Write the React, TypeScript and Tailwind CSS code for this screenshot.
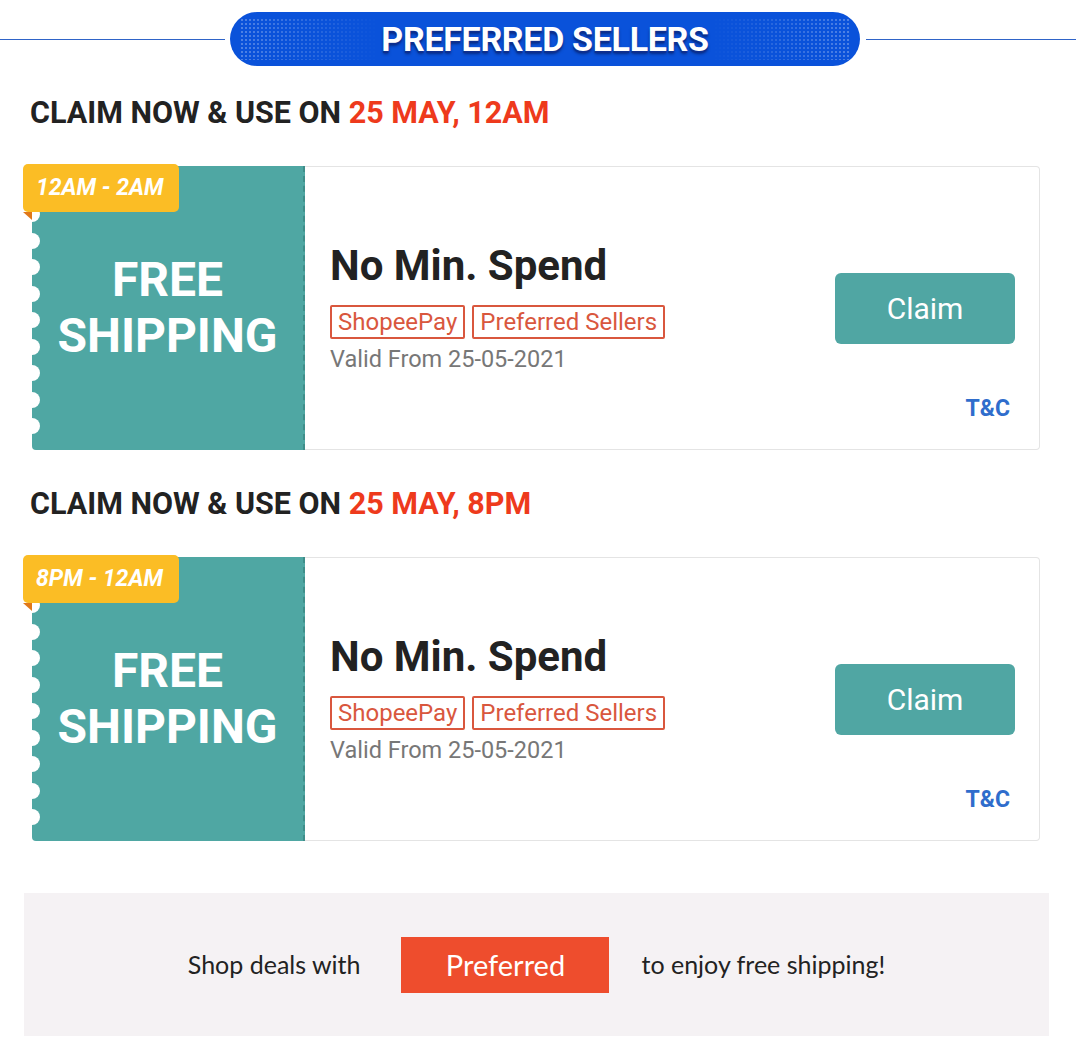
import { Fragment } from 'react';

type Voucher = {
  day: string;
  slot: string;
};

const vouchers: Voucher[] = [
  { day: '25 MAY, 12AM', slot: '12AM - 2AM' },
  { day: '25 MAY, 8PM', slot: '8PM - 12AM' },
];

const notches = Array.from({ length: 9 }, (_, i) => i);

function VoucherCard({ slot }: { slot: string }) {
  return (
    <div className="relative flex h-[284px] w-[1008px] ml-[32px] bg-white">
      {/* teal stub with scalloped edge */}
      <div className="relative flex w-[273px] shrink-0 items-center justify-center rounded-l-[4px] border-r-2 border-dashed border-[#3f8e8a] bg-[#4fa7a3]">
        <div className="absolute -left-[8px] top-[40px] flex flex-col gap-[10.5px]">
          {notches.map((n) => (
            <span key={n} className="block h-[16px] w-[16px] rounded-full bg-white" />
          ))}
        </div>
        <p className="text-center text-[48px] font-bold leading-[56px] text-white">
          FREE
          <br />
          SHIPPING
        </p>
      </div>

      {/* ribbon */}
      <div className="absolute -left-[9px] -top-[2px] flex h-[48px] w-[156px] items-center rounded-[5px] bg-[#fbbd25] pl-[13px]">
        <span className="text-[23px] font-bold italic text-white">{slot}</span>
      </div>
      <div className="absolute -left-[9px] top-[46px] h-0 w-0 border-l-[9px] border-t-[8px] border-l-transparent border-t-[#e0781a]" />

      <div className="flex flex-1 items-center rounded-r-[4px] border border-l-0 border-[#e4e4e4]">
        <div className="flex-1 pl-[25px]">
          <h3 className="text-[42px] font-bold leading-[46px] text-[#222]">No Min. Spend</h3>
          <div className="mt-[16px] flex gap-[7px]">
            <span className="rounded-[2px] border-2 border-[#d9573e] px-[6px] text-[24px] leading-[30px] text-[#d9573e]">ShopeePay</span>
            <span className="rounded-[2px] border-2 border-[#d9573e] px-[6px] text-[24px] leading-[30px] text-[#d9573e]">Preferred Sellers</span>
          </div>
          <p className="mt-[6px] text-[23.5px] leading-[28px] text-[#777]">Valid From 25-05-2021</p>
        </div>
        <div className="grid w-[204px] grid-rows-[1fr_auto_1fr] self-stretch pr-[24px]">
          <div />
          <button className="h-[71px] w-[180px] rounded-[6px] bg-[#50a6a3] text-[30px] text-white">Claim</button>
          <div className="flex items-end justify-end pb-[26px] pr-[5px]">
            <span className="text-[23px] font-bold leading-[28px] text-[#2f6dcc]">T&amp;C</span>
          </div>
        </div>
      </div>
    </div>
  );
}

export default function App() {
  return (
    <div className="min-h-[1050px] w-[1076px] bg-white pt-[12px] font-['Roboto',sans-serif]">
      <div className="flex items-center">
        <div className="h-px w-[225px] bg-[#2f64c8]" />
        <div className="relative ml-[5px] mr-[6px] flex h-[54px] w-[630px] items-center justify-center overflow-hidden rounded-full bg-[#0a52da]">
          <div className="absolute inset-y-[6px] left-[10px] w-[140px] bg-[radial-gradient(circle,rgba(255,255,255,0.28)_1px,transparent_1.3px)] bg-[length:4px_4px] [mask-image:linear-gradient(90deg,black,transparent)]" />
          <div className="absolute inset-y-[6px] right-[10px] w-[140px] bg-[radial-gradient(circle,rgba(255,255,255,0.28)_1px,transparent_1.3px)] bg-[length:4px_4px] [mask-image:linear-gradient(270deg,black,transparent)]" />
          <span className="relative text-[34px] font-bold tracking-[-0.3px] text-white [text-shadow:0_2px_0_#0d2f8f,0_3px_3px_rgba(0,0,40,0.5)]">
            PREFERRED SELLERS
          </span>
        </div>
        <div className="h-px flex-1 bg-[#2f64c8]" />
      </div>

      {vouchers.map((v, i) => (
        <Fragment key={v.day}>
          <h2 className={`${i === 0 ? 'mt-[30px]' : 'mt-[37px]'} mb-[36px] pl-[30px] text-[30.5px] font-bold leading-[34px] text-[#222]`}>
            CLAIM NOW &amp; USE ON <span className="text-[#ee3a1c]">{v.day}</span>
          </h2>
          <VoucherCard slot={v.slot} />
        </Fragment>
      ))}

      <div className="mx-[24px] mt-[52px] flex h-[143px] w-[1025px] items-center justify-center bg-[#f5f2f4] font-['Lato',sans-serif] text-[25px] text-[#222]">
        <span className="mr-[41px]">Shop deals with</span>
        <span className="flex h-[56px] w-[208px] items-center justify-center bg-[#ee4d2d] text-[29px] text-white">Preferred</span>
        <span className="ml-[32px]">to enjoy free shipping!</span>
      </div>
    </div>
  );
}
